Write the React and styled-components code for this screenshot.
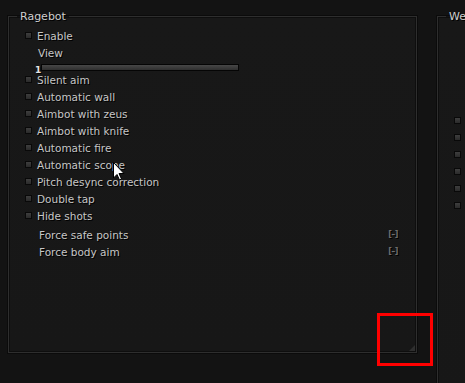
import React from 'react';
import styled, { createGlobalStyle } from 'styled-components';

const GlobalStyle = createGlobalStyle`
  html, body {
    margin: 0;
    padding: 0;
    background: #131313;
    overflow: hidden;
  }
  body {
    font-family: "DejaVu Sans", Verdana, sans-serif;
    font-size: 10.5px;
    color: #c8c8c8;
  }
`;

const Page = styled.div`
  position: relative;
  width: 465px;
  height: 383px;
  display: flex;
  align-items: flex-start;
  gap: 20px;
  padding: 10px 0 0 8px;
  box-sizing: border-box;
  overflow: hidden;
`;

const GroupBox = styled.fieldset`
  position: relative;
  flex: 0 0 auto;
  width: ${p => p.$width}px;
  height: ${p => p.$height}px;
  margin: 0;
  padding: 4px 18px 0 16px;
  box-sizing: border-box;
  border: 1px solid #2e2e2e;
  box-shadow: 0 0 0 1px #0b0b0b, inset 0 0 0 1px #0e0e0e;
  background: linear-gradient(#181818, #171717);
`;

const Legend = styled.legend`
  margin-left: -8px;
  padding: 0 3px;
  font-size: 11px;
  line-height: 13px;
  color: #cfcfcf;
  text-shadow: 1px 1px 0 #000;
`;

const List = styled.div`
  display: flex;
  flex-direction: column;
`;

const Row = styled.div`
  display: flex;
  align-items: center;
  height: ${p => p.$h || 17}px;
  padding-left: ${p => p.$indent || 0}px;
  gap: 5px;
`;

const Check = styled.span`
  flex: 0 0 auto;
  width: 5px;
  height: 5px;
  border: 1px solid #090909;
  background: linear-gradient(#3e3e3e, #2b2b2b);
`;

const Label = styled.span`
  color: #c6c6c6;
  text-shadow: 1px 1px 0 #000;
  white-space: nowrap;
  flex: 1;
`;

const KeyBind = styled.span`
  font-size: 8px;
  font-weight: bold;
  color: #6e6e6e;
  text-shadow: 1px 1px 0 #000;
  letter-spacing: -0.5px;
`;

const SliderRow = styled.div`
  position: relative;
  height: 9px;
  padding-left: 16px;
  display: flex;
  align-items: flex-start;
`;

const SliderTrack = styled.div`
  width: 196px;
  height: 5px;
  margin-top: 2px;
  border: 1px solid #050505;
  background: linear-gradient(#474747, #2f2f2f);
`;

const SliderValue = styled.span`
  position: absolute;
  left: 10px;
  top: 3px;
  font-size: 9px;
  font-weight: bold;
  color: #e4e4e4;
  text-shadow: 1px 1px 0 #000;
`;

const Spacer = styled.div`
  height: ${p => p.$h}px;
`;

const Grip = styled.div`
  position: absolute;
  right: 1px;
  bottom: 1px;
  width: 0;
  height: 0;
  border-left: 6px solid transparent;
  border-bottom: 6px solid #2f2f2f;
`;

const Highlight = styled.div`
  position: absolute;
  left: 377px;
  top: 313px;
  width: 50px;
  height: 47px;
  border: 3px solid #ff0000;
`;

const Cursor = styled.svg`
  position: absolute;
  left: 113px;
  top: 162px;
`;

const ragebotItems = [
  'Silent aim',
  'Automatic wall',
  'Aimbot with zeus',
  'Aimbot with knife',
  'Automatic fire',
  'Automatic scope',
  'Pitch desync correction',
  'Double tap',
  'Hide shots',
];

const App = () => (
  <>
    <GlobalStyle />
    <Page>
      <GroupBox $width={409} $height={343}>
        <Legend>Ragebot</Legend>
        <List>
          <Row>
            <Check />
            <Label>Enable</Label>
          </Row>
          <Row $indent={13} $h={18}>
            <Label>View</Label>
          </Row>
          <SliderRow>
            <SliderTrack />
            <SliderValue>1</SliderValue>
          </SliderRow>
          {ragebotItems.map(item => (
            <Row key={item}>
              <Check />
              <Label>{item}</Label>
            </Row>
          ))}
          <Spacer $h={2} />
          <Row $indent={14}>
            <Label>Force safe points</Label>
            <KeyBind>[–]</KeyBind>
          </Row>
          <Row $indent={14}>
            <Label>Force body aim</Label>
            <KeyBind>[–]</KeyBind>
          </Row>
        </List>
        <Grip />
      </GroupBox>
      <GroupBox $width={200} $height={400}>
        <Legend>Weapon</Legend>
        <List>
          <Spacer $h={85} />
          {[0, 1, 2, 3, 4, 5].map(i => (
            <Row key={i}>
              <Check />
            </Row>
          ))}
        </List>
      </GroupBox>
      <Highlight />
      <Cursor width="12" height="19" viewBox="0 0 12 19">
        <path d="M0.5 0.5 L0.5 16 L4 12.5 L6.5 18 L8.5 17 L6 11.5 L11 11.5 Z" fill="#fff" stroke="#000" strokeWidth="1" />
      </Cursor>
    </Page>
  </>
);

export default App;
